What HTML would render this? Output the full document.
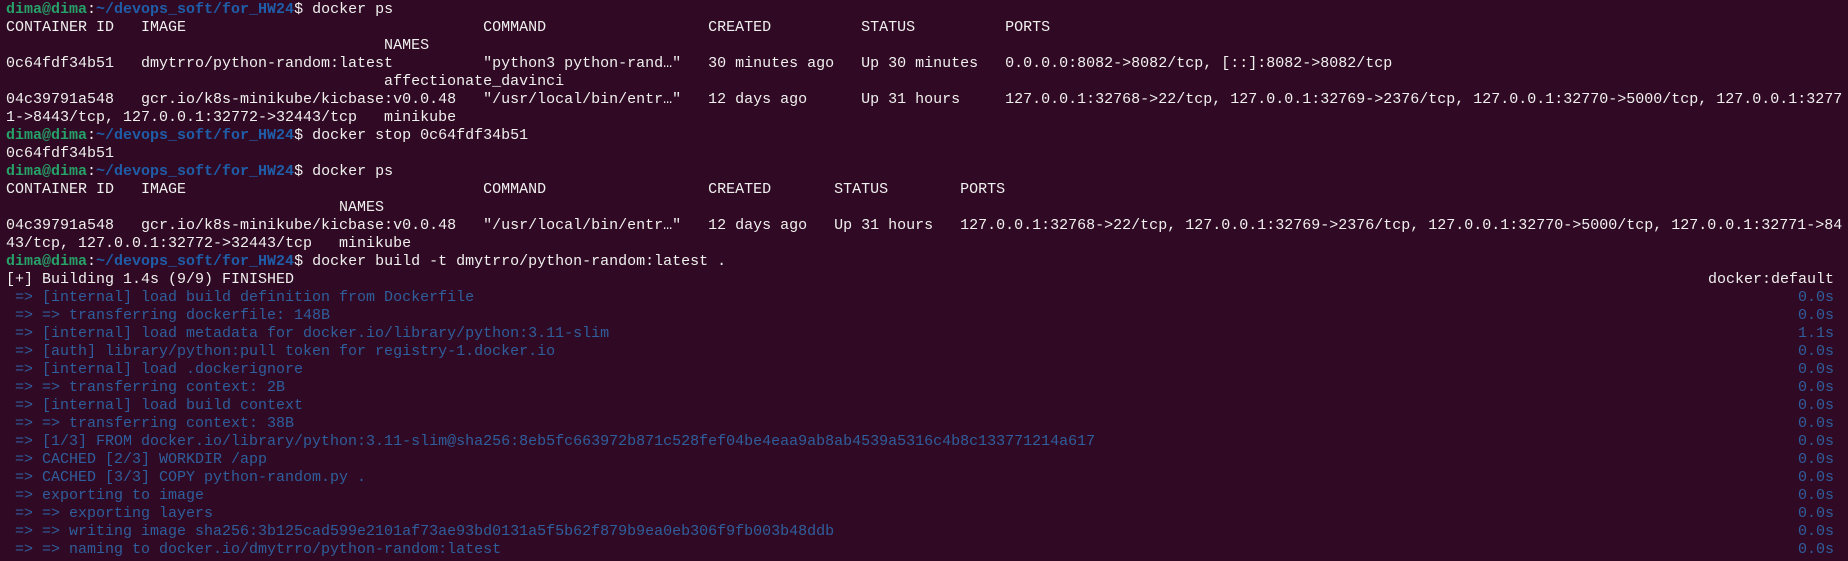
<!DOCTYPE html>
<html><head><meta charset="utf-8"><style>
html,body{margin:0;padding:0;background:#300a24;width:1848px;height:561px;overflow:hidden}
.t{position:relative;margin:0;padding:1px 0 0 6px;font-family:"Liberation Mono",monospace;font-size:15px;line-height:18px;color:#f0f0ee;white-space:normal;height:560px;overflow:hidden}
.l{position:relative;height:18px;width:1828px;white-space:pre}
.r{position:absolute;right:0;top:0}
.g{color:#26a269;font-weight:bold}
.b{color:#1f5da8;font-weight:bold}
.d{color:#2f5e9c}
</style></head><body><div class="t"><div class="l"><span class="g">dima@dima</span>:<span class="b">~/devops_soft/for_HW24</span>$ docker ps</div><div class="l">CONTAINER ID   IMAGE                                 COMMAND                  CREATED          STATUS          PORTS</div><div class="l">                                          NAMES</div><div class="l">0c64fdf34b51   dmytrro/python-random:latest          "python3 python-rand…"   30 minutes ago   Up 30 minutes   0.0.0.0:8082-&gt;8082/tcp, [::]:8082-&gt;8082/tcp</div><div class="l">                                          affectionate_davinci</div><div class="l">04c39791a548   gcr.io/k8s-minikube/kicbase:v0.0.48   "/usr/local/bin/entr…"   12 days ago      Up 31 hours     127.0.0.1:32768-&gt;22/tcp, 127.0.0.1:32769-&gt;2376/tcp, 127.0.0.1:32770-&gt;5000/tcp, 127.0.0.1:3277</div><div class="l">1-&gt;8443/tcp, 127.0.0.1:32772-&gt;32443/tcp   minikube</div><div class="l"><span class="g">dima@dima</span>:<span class="b">~/devops_soft/for_HW24</span>$ docker stop 0c64fdf34b51</div><div class="l">0c64fdf34b51</div><div class="l"><span class="g">dima@dima</span>:<span class="b">~/devops_soft/for_HW24</span>$ docker ps</div><div class="l">CONTAINER ID   IMAGE                                 COMMAND                  CREATED       STATUS        PORTS</div><div class="l">                                     NAMES</div><div class="l">04c39791a548   gcr.io/k8s-minikube/kicbase:v0.0.48   "/usr/local/bin/entr…"   12 days ago   Up 31 hours   127.0.0.1:32768-&gt;22/tcp, 127.0.0.1:32769-&gt;2376/tcp, 127.0.0.1:32770-&gt;5000/tcp, 127.0.0.1:32771-&gt;84</div><div class="l">43/tcp, 127.0.0.1:32772-&gt;32443/tcp   minikube</div><div class="l"><span class="g">dima@dima</span>:<span class="b">~/devops_soft/for_HW24</span>$ docker build -t dmytrro/python-random:latest .</div><div class="l">[+] Building 1.4s (9/9) FINISHED<span class="r">docker:default</span></div><div class="l d"> =&gt; [internal] load build definition from Dockerfile<span class="r">0.0s</span></div><div class="l d"> =&gt; =&gt; transferring dockerfile: 148B<span class="r">0.0s</span></div><div class="l d"> =&gt; [internal] load metadata for docker.io/library/python:3.11-slim<span class="r">1.1s</span></div><div class="l d"> =&gt; [auth] library/python:pull token for registry-1.docker.io<span class="r">0.0s</span></div><div class="l d"> =&gt; [internal] load .dockerignore<span class="r">0.0s</span></div><div class="l d"> =&gt; =&gt; transferring context: 2B<span class="r">0.0s</span></div><div class="l d"> =&gt; [internal] load build context<span class="r">0.0s</span></div><div class="l d"> =&gt; =&gt; transferring context: 38B<span class="r">0.0s</span></div><div class="l d"> =&gt; [1/3] FROM docker.io/library/python:3.11-slim@sha256:8eb5fc663972b871c528fef04be4eaa9ab8ab4539a5316c4b8c133771214a617<span class="r">0.0s</span></div><div class="l d"> =&gt; CACHED [2/3] WORKDIR /app<span class="r">0.0s</span></div><div class="l d"> =&gt; CACHED [3/3] COPY python-random.py .<span class="r">0.0s</span></div><div class="l d"> =&gt; exporting to image<span class="r">0.0s</span></div><div class="l d"> =&gt; =&gt; exporting layers<span class="r">0.0s</span></div><div class="l d"> =&gt; =&gt; writing image sha256:3b125cad599e2101af73ae93bd0131a5f5b62f879b9ea0eb306f9fb003b48ddb<span class="r">0.0s</span></div><div class="l d"> =&gt; =&gt; naming to docker.io/dmytrro/python-random:latest<span class="r">0.0s</span></div></div></body></html>
